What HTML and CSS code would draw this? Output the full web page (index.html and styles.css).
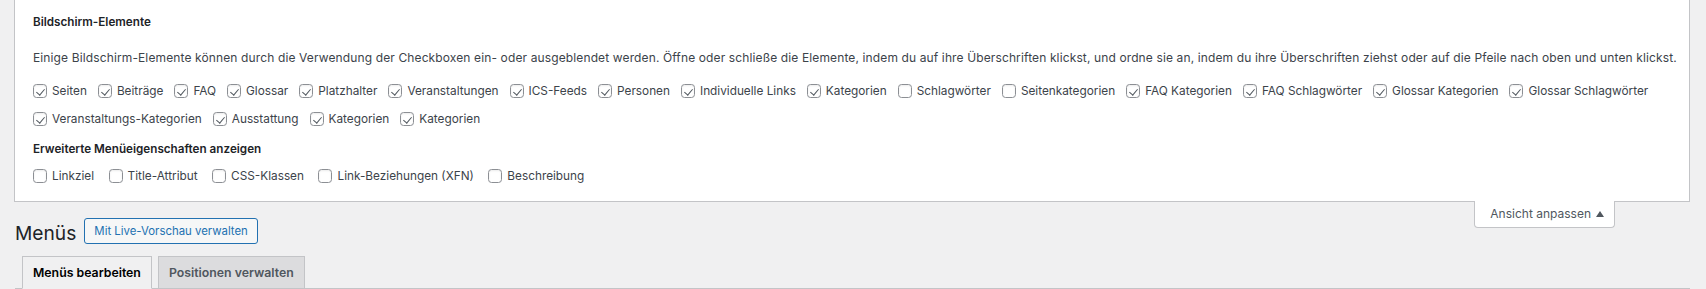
FILE: index.html
```html
<!DOCTYPE html>
<html lang="de">

<head>
    <meta charset="UTF-8">
    <meta name="viewport" content="width=device-width, initial-scale=1.0">
    <title>Menüs</title>

    <link rel="stylesheet" href="styles.css">
</head>

<body>
    <div class="screen-meta">
        <div class="screen-options">
            <h5 class="prefs-title">Bildschirm-Elemente</h5>
            <p class="prefs-text">Einige Bildschirm-Elemente können durch die Verwendung der Checkboxen ein- oder ausgeblendet werden. Öffne oder schließe die Elemente, indem du auf ihre Überschriften klickst, und ordne sie an, indem du ihre Überschriften ziehst oder auf die Pfeile nach oben und unten klickst.</p>
            <div class="prefs-row">
                <label><input type="checkbox" checked>Seiten</label>
                <label><input type="checkbox" checked>Beiträge</label>
                <label><input type="checkbox" checked>FAQ</label>
                <label><input type="checkbox" checked>Glossar</label>
                <label><input type="checkbox" checked>Platzhalter</label>
                <label><input type="checkbox" checked>Veranstaltungen</label>
                <label><input type="checkbox" checked>ICS-Feeds</label>
                <label><input type="checkbox" checked>Personen</label>
                <label><input type="checkbox" checked>Individuelle Links</label>
                <label><input type="checkbox" checked>Kategorien</label>
                <label><input type="checkbox">Schlagwörter</label>
                <label><input type="checkbox">Seitenkategorien</label>
                <label><input type="checkbox" checked>FAQ Kategorien</label>
                <label><input type="checkbox" checked>FAQ Schlagwörter</label>
                <label><input type="checkbox" checked>Glossar Kategorien</label>
                <label><input type="checkbox" checked>Glossar Schlagwörter</label>
            </div>
            <div class="prefs-row">
                <label><input type="checkbox" checked>Veranstaltungs-Kategorien</label>
                <label><input type="checkbox" checked>Ausstattung</label>
                <label><input type="checkbox" checked>Kategorien</label>
                <label><input type="checkbox" checked>Kategorien</label>
            </div>

            <h5 class="prefs-title prefs-title-second">Erweiterte Menüeigenschaften anzeigen</h5>
            <div class="prefs-row prefs-row-last">
                <label><input type="checkbox">Linkziel</label>
                <label><input type="checkbox">Title-Attribut</label>
                <label><input type="checkbox">CSS-Klassen</label>
                <label><input type="checkbox">Link-Beziehungen (XFN)</label>
                <label><input type="checkbox">Beschreibung</label>
            </div>
        </div>
    </div>

    <div class="screen-links">
        <button class="show-settings">Ansicht anpassen<span class="arrow"></span></button>
    </div>

    <div class="wrap">
        <div class="title-row">
            <h1>Menüs</h1>
            <a class="title-action" href="#">Mit Live-Vorschau verwalten</a>
        </div>
        <nav class="nav-tabs">
            <a class="nav-tab nav-tab-active" href="#">Menüs bearbeiten</a>
            <a class="nav-tab" href="#">Positionen verwalten</a>
        </nav>
    </div>
</body>
</html>
```

FILE: styles.css
```css
* {
    box-sizing: border-box;
}
body {
    margin: 0;
    background: #f0f0f1;
    color: #3c434a;
    font-family: Inter, Roboto, "Liberation Sans", sans-serif;
    font-size: 12px;
}

/* Bildschirm-Optionen */
.screen-meta {
    margin: 0 16px 0 14px;
    background: #fff;
    border: 1px solid #c3c4c7;
    border-top: 0;
}
.screen-options {
    padding: 12px 10px 11px 18px;
}
.prefs-title {
    margin: 0;
    font-size: 11.7px;
    font-weight: 600;
    line-height: 20px;
    color: #1d2327;
}
.prefs-title-second {
    margin-top: 6px;
}
.prefs-text {
    margin: 16px 0 9px;
    line-height: 20px;
    letter-spacing: 0.125px;
    white-space: nowrap;
}
.prefs-row {
    display: flex;
    flex-wrap: nowrap;
}
.prefs-row-last {
    margin-top: 3px;
}
.prefs-row label {
    display: flex;
    align-items: center;
    height: 28px;
    margin-right: 11px;
    font-size: 11.8px;
    white-space: nowrap;
}
.prefs-row-last label {
    margin-right: 14.5px;
}
.prefs-row input {
    appearance: none;
    -webkit-appearance: none;
    flex: none;
    width: 14px;
    height: 14px;
    margin: 0 5px 0 0;
    border: 1px solid #8c8f94;
    border-radius: 3.5px;
    background: #fff;
    box-shadow: inset 0 1px 2px rgba(0, 0, 0, .08);
}
.prefs-row input:checked::before {
    content: "";
    display: block;
    width: 4px;
    height: 7px;
    margin: 1.5px 0 0 4px;
    border: solid #50575e;
    border-width: 0 1.5px 1.5px 0;
    transform: rotate(40deg);
}

/* Reiter "Ansicht anpassen" */
.screen-links {
    float: right;
    margin: -1px 91px 0 0;
}
.show-settings {
    display: flex;
    align-items: center;
    height: 27px;
    padding: 0 5px 1px 15px;
    background: #fff;
    border: 1px solid #c3c4c7;
    border-top: 0;
    border-radius: 0 0 4px 4px;
    color: #50575e;
    font-family: inherit;
    font-size: 12px;
    line-height: 20px;
}
.arrow {
    width: 18px;
    display: flex;
    justify-content: center;
}
.arrow::before {
    content: "";
    border-left: 4px solid transparent;
    border-right: 4px solid transparent;
    border-bottom: 6px solid #50575e;
}

/* Seitentitel und Reiter */
.wrap {
    margin: 0 16px 0 15px;
    padding-top: 16px;
}
.title-row {
    display: flex;
    align-items: flex-start;
}
h1 {
    margin: 0;
    font-size: 19.2px;
    font-weight: 400;
    line-height: 30px;
    color: #1d2327;
}
.title-action {
    margin-left: 8px;
    height: 26px;
    padding: 0 9px;
    border: 1px solid #2271b1;
    border-radius: 3px;
    background: #f6f7f7;
    color: #2271b1;
    font-size: 11.4px;
    line-height: 24px;
    text-decoration: none;
}
.nav-tabs {
    display: flex;
    margin-top: 8px;
    border-bottom: 1px solid #c3c4c7;
}
.nav-tab {
    margin-left: 7px;
    padding: 5px 10px;
    border: 1px solid #c3c4c7;
    border-bottom: 0;
    background: #dcdcde;
    color: #50575e;
    font-size: 12.3px;
    font-weight: 600;
    line-height: 21px;
    text-decoration: none;
}
.nav-tab + .nav-tab {
    margin-left: 6px;
}
.nav-tab-active {
    background: #f0f0f1;
    color: #000;
    border-bottom: 1px solid #f0f0f1;
    margin-bottom: -1px;
}
```
